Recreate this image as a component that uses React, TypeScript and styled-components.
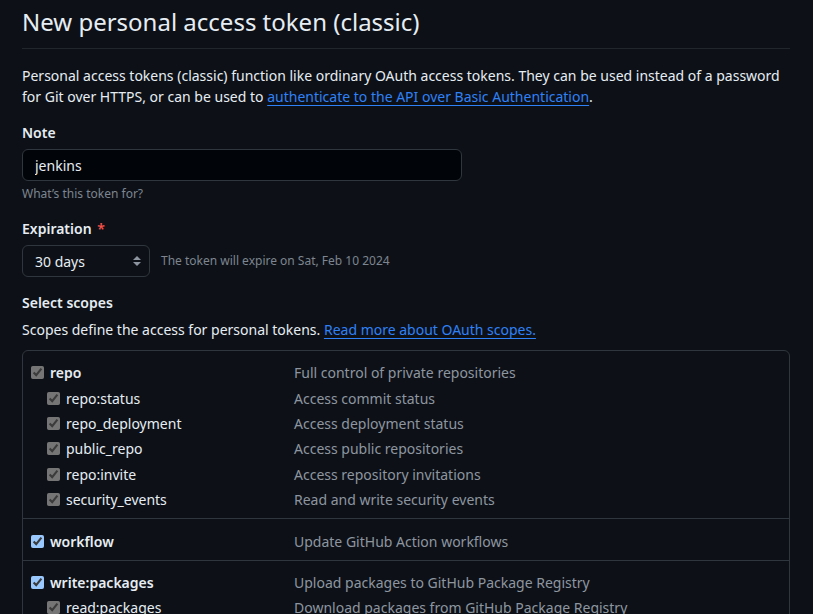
import React from "react";
import styled, { createGlobalStyle } from "styled-components";

const GlobalStyle = createGlobalStyle`
    html, body {
        margin: 0;
        padding: 0;
        background: #0d1117;
        color-scheme: dark;
    }
    body {
        font-family: "Noto Sans", "Liberation Sans", sans-serif;
        font-size: 14px;
        line-height: 1.5;
        color: #e6edf3;
        overflow: hidden;
    }
`;

type Scope = {
    name: string;
    description: string;
    checked: boolean;
    locked?: boolean;
    children?: { name: string; description: string }[];
};

const scopes: Scope[] = [
    {
        name: "repo",
        description: "Full control of private repositories",
        checked: true,
        locked: true,
        children: [
            { name: "repo:status", description: "Access commit status" },
            { name: "repo_deployment", description: "Access deployment status" },
            { name: "public_repo", description: "Access public repositories" },
            { name: "repo:invite", description: "Access repository invitations" },
            { name: "security_events", description: "Read and write security events" },
        ],
    },
    { name: "workflow", description: "Update GitHub Action workflows", checked: true },
    {
        name: "write:packages",
        description: "Upload packages to GitHub Package Registry",
        checked: true,
        children: [
            { name: "read:packages", description: "Download packages from GitHub Package Registry" },
        ],
    },
    { name: "delete:packages", description: "Delete packages from GitHub Package Registry", checked: false },
];

export default function App() {
    return (
        <>
            <GlobalStyle />
            <Page>
                <Subhead>
                    <Title>New personal access token (classic)</Title>
                </Subhead>

                <Intro>
                    Personal access tokens (classic) function like ordinary OAuth access tokens. They can be used
                    instead of a password for Git over HTTPS, or can be used to{" "}
                    <Link href="#">authenticate to the API over Basic Authentication</Link>.
                </Intro>

                <FormGroup>
                    <Label>Note</Label>
                    <TextInput defaultValue="jenkins" />
                    <Note>What’s this token for?</Note>
                </FormGroup>

                <FormGroup>
                    <Label>
                        Expiration <Required>*</Required>
                    </Label>
                    <InlineRow>
                        <SelectWrap>
                            <Select defaultValue="30">
                                <option value="7">7 days</option>
                                <option value="30">30 days</option>
                                <option value="60">60 days</option>
                                <option value="90">90 days</option>
                            </Select>
                            <SelectIcon width="8" height="12" viewBox="0 0 8 12">
                                <polygon points="0,5 4,1 8,5" fill="#8d96a0" />
                                <polygon points="0,7 4,11 8,7" fill="#8d96a0" />
                            </SelectIcon>
                        </SelectWrap>
                        <InlineNote>The token will expire on Sat, Feb 10 2024</InlineNote>
                    </InlineRow>
                </FormGroup>

                <FormGroup>
                    <Label>Select scopes</Label>
                    <ScopesIntro>
                        Scopes define the access for personal tokens.{" "}
                        <Link href="#">Read more about OAuth scopes.</Link>
                    </ScopesIntro>

                    <ScopeBox>
                        {scopes.map(scope => (
                            <ScopeGroup key={scope.name}>
                                <ScopeRow>
                                    <ScopeLabel>
                                        {scope.locked ? (
                                            <Check type="checkbox" checked={scope.checked} disabled readOnly />
                                        ) : (
                                            <Check type="checkbox" defaultChecked={scope.checked} />
                                        )}
                                        <ScopeName $main>{scope.name}</ScopeName>
                                    </ScopeLabel>
                                    <ScopeDesc>{scope.description}</ScopeDesc>
                                </ScopeRow>
                                {scope.children?.map(child => (
                                    <ScopeRow key={child.name}>
                                        <ScopeLabel $indent>
                                            <Check type="checkbox" checked={scope.checked} disabled readOnly />
                                            <ScopeName>{child.name}</ScopeName>
                                        </ScopeLabel>
                                        <ScopeDesc>{child.description}</ScopeDesc>
                                    </ScopeRow>
                                ))}
                            </ScopeGroup>
                        ))}
                    </ScopeBox>
                </FormGroup>
            </Page>
        </>
    );
}

const Page = styled.div`
    width: 768px;
    padding: 4px 0 0 22px;
`;

const Subhead = styled.div`
    padding-bottom: 8px;
    margin-bottom: 16px;
    border-bottom: 1px solid #21262d;
`;

const Title = styled.h1`
    margin: 0;
    font-size: 24px;
    font-weight: 400;
    line-height: 36px;
    color: #e6edf3;
`;

const Intro = styled.p`
    margin: 0;
    line-height: 21px;
`;

const Link = styled.a`
    color: #2f81f7;
    text-decoration: underline;
    text-underline-offset: 3px;
`;

const FormGroup = styled.div`
    margin-top: 15px;
`;

const Label = styled.div`
    font-weight: 600;
    line-height: 21px;
    margin-bottom: 6px;
`;

const Required = styled.span`
    color: #f85149;
    margin-left: 2px;
`;

const TextInput = styled.input`
    display: block;
    box-sizing: border-box;
    width: 440px;
    height: 32px;
    padding: 5px 12px;
    background: #010409;
    border: 1px solid #30363d;
    border-radius: 6px;
    color: #e6edf3;
    font: inherit;
    font-size: 14px;
    outline: none;
`;

const Note = styled.div`
    margin-top: 4px;
    font-size: 12px;
    line-height: 18px;
    color: #7d8590;
`;

const InlineRow = styled.div`
    display: flex;
    align-items: center;
    gap: 11px;
`;

const SelectWrap = styled.div`
    position: relative;
    width: 128px;
    height: 32px;
`;

const Select = styled.select`
    appearance: none;
    box-sizing: border-box;
    width: 100%;
    height: 32px;
    padding: 0 24px 0 12px;
    background: #0d1117;
    border: 1px solid #30363d;
    border-radius: 6px;
    color: #e6edf3;
    font: inherit;
    font-size: 14px;
    outline: none;
`;

const SelectIcon = styled.svg`
    position: absolute;
    right: 9px;
    top: 10px;
    pointer-events: none;
`;

const InlineNote = styled.span`
    font-size: 12px;
    line-height: 18px;
    color: #7d8590;
`;

const ScopesIntro = styled.p`
    margin: 0 0 10px;
    line-height: 21px;
`;

const ScopeBox = styled.div`
    border: 1px solid #30363d;
    border-radius: 6px;
`;

const ScopeGroup = styled.div`
    padding: 9px 8px 6px;

    & + & {
        border-top: 1px solid #30363d;
    }
`;

const ScopeRow = styled.div`
    display: grid;
    grid-template-columns: 263px 1fr;
    align-items: center;
    height: 25.4px;
`;

const ScopeLabel = styled.label<{ $indent?: boolean }>`
    display: flex;
    align-items: center;
    gap: 6px;
    padding-left: ${p => (p.$indent ? "16px" : "0")};
`;

const Check = styled.input`
    width: 13px;
    height: 13px;
    margin: 0;
`;

const ScopeName = styled.span<{ $main?: boolean }>`
    font-weight: ${p => (p.$main ? 600 : 400)};
    color: #e6edf3;
`;

const ScopeDesc = styled.span`
    color: #8d96a0;
`;
